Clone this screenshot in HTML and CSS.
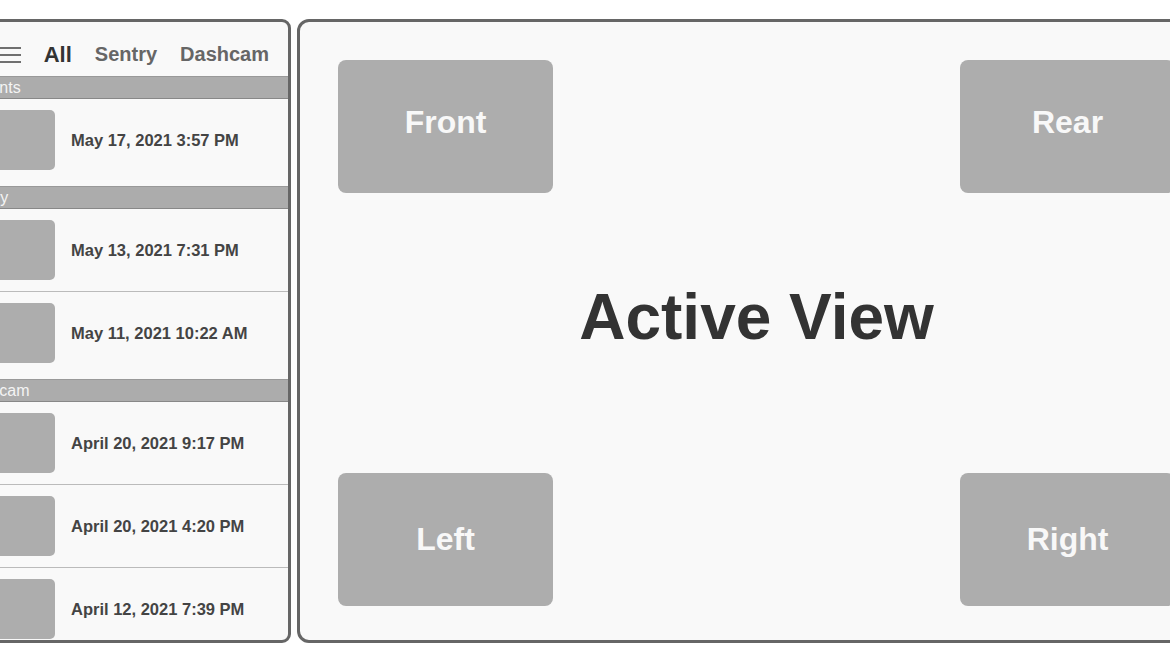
FILE: index.html
```html
<!DOCTYPE html>
<html lang="en">
<head>
    <meta charset="UTF-8">
    <title>Dashcam Viewer</title>
    <link rel="stylesheet" href="styles.css">
</head>
<body>
    <div class="app">
        <!-- Clip list -->
        <div class="sidebar">
            <div class="tabs">
                <span class="menu-icon">
                    <svg width="24" height="20" viewBox="0 0 24 20"><path d="M0 3h24M0 10h24M0 17h24" stroke="#707070" stroke-width="2.2"/></svg>
                </span>
                <span class="tab active">All</span>
                <span class="tab">Sentry</span>
                <span class="tab">Dashcam</span>
            </div>
            <div class="section">
                <div class="section-title">Recents</div>
                <div class="clip"><div class="thumb"></div><span class="clip-date">May 17, 2021 3:57 PM</span></div>
            </div>
            <div class="section">
                <div class="section-title">Sentry</div>
                <div class="clip"><div class="thumb"></div><span class="clip-date">May 13, 2021 7:31 PM</span></div>
                <div class="clip"><div class="thumb"></div><span class="clip-date">May 11, 2021 10:22 AM</span></div>
            </div>
            <div class="section">
                <div class="section-title">Dashcam</div>
                <div class="clip"><div class="thumb"></div><span class="clip-date">April 20, 2021 9:17 PM</span></div>
                <div class="clip"><div class="thumb"></div><span class="clip-date">April 20, 2021 4:20 PM</span></div>
                <div class="clip"><div class="thumb"></div><span class="clip-date">April 12, 2021 7:39 PM</span></div>
            </div>
        </div>

        <!-- Player -->
        <div class="viewer">
            <div class="cam top">Front</div>
            <div class="spacer"></div>
            <div class="cam top">Rear</div>
            <div class="active-view">Active View</div>
            <div class="cam">Left</div>
            <div class="spacer"></div>
            <div class="cam">Right</div>
        </div>
    </div>
</body>
</html>
```

FILE: styles.css
```css
html, body {
    margin: 0;
    padding: 0;
    background-color: #fff;
    font-family: 'Liberation Sans', Arial, sans-serif;
    overflow: hidden;
}
.app {
    display: flex;
    gap: 6px;
    margin-left: -53px;
    padding-top: 19px;
}
.sidebar {
    width: 344px;
    height: 624px;
    box-sizing: border-box;
    flex-shrink: 0;
    border: 3px solid #666;
    border-radius: 9px;
    background-color: #f9f9f9;
    overflow: hidden;
}
.tabs {
    height: 54px;
    box-sizing: border-box;
    padding: 11px 19px 0 0;
    display: flex;
    align-items: center;
    justify-content: flex-end;
    gap: 23px;
}
.menu-icon {
    display: flex;
}
.tab {
    font-size: 20px;
    font-weight: bold;
    color: #666;
}
.tab.active {
    font-size: 22px;
    color: #333;
}
.section-title {
    height: 21px;
    line-height: 21px;
    padding-left: 12px;
    background-color: #acacac;
    border-top: 1px solid #999;
    border-bottom: 1px solid #888;
    color: #f4f4f4;
    font-size: 16px;
}
.clip {
    display: flex;
    align-items: center;
    gap: 16px;
    padding: 11px 0 11px 8px;
    border-bottom: 1px solid #bbb;
}
.clip:first-of-type {
    padding-top: 12px;
}
.clip:last-child {
    border-bottom: none;
    padding-bottom: 16px;
}
.thumb {
    width: 97px;
    height: 60px;
    border-radius: 5px;
    background-color: #adadad;
}
.clip-date {
    font-size: 16.5px;
    font-weight: bold;
    color: #444;
}
.viewer {
    width: 918px;
    height: 624px;
    box-sizing: border-box;
    flex-shrink: 0;
    border: 3px solid #666;
    border-radius: 12px;
    background-color: #f9f9f9;
    padding: 38px 37px 34px 38px;
    display: grid;
    grid-template-columns: 215px 1fr 215px;
    grid-template-rows: 133px 1fr 133px;
}
.cam {
    display: flex;
    align-items: center;
    justify-content: center;
    border-radius: 8px;
    background-color: #adadad;
    color: #f8f8f8;
    font-size: 32px;
    font-weight: bold;
}
.cam.top {
    padding-bottom: 8px;
}
.active-view {
    grid-column: 1 / 4;
    align-self: center;
    justify-self: center;
    margin-bottom: 32px;
    font-size: 64px;
    font-weight: bold;
    color: #333;
}
```
